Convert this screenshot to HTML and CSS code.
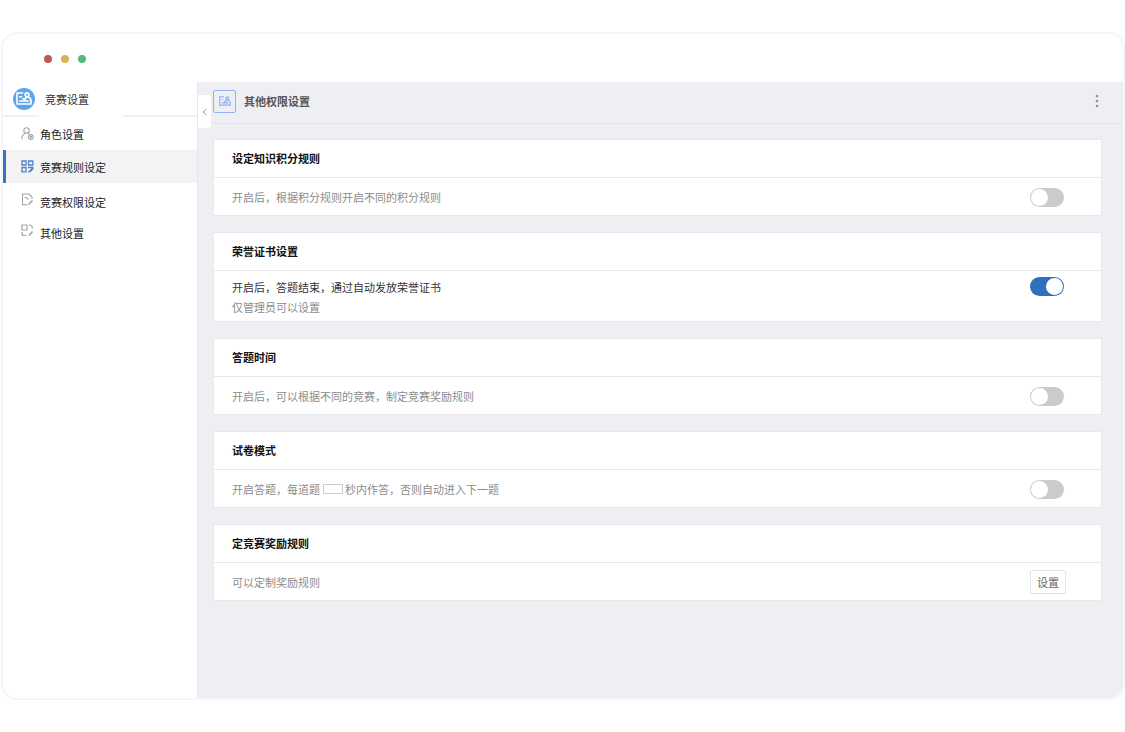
FILE: index.html
```html
<!DOCTYPE html>
<html lang="zh-CN">
<head>
    <meta charset="UTF-8">
    <meta name="viewport" content="width=device-width, initial-scale=1.0">
    <title>竞赛设置</title>
    <link rel="stylesheet" href="styles.css">
</head>
<body>

<div class="window">
    <div class="titlebar">
        <span class="dot red"></span>
        <span class="dot yellow"></span>
        <span class="dot green"></span>
    </div>

    <div class="layout">
        <aside class="sidebar">
            <div class="sidebar-head">
                <span class="logo">
                    <svg width="16" height="13" viewBox="0 0 16 13" fill="none" stroke="#fff" stroke-width="1.6" stroke-linejoin="round" stroke-linecap="round">
                        <path d="M6.500 1H1V12H15V9"/>
                        <path d="M3.800 4.800H5.500M3.800 9H12.500"/>
                        <circle cx="11" cy="2.800" r="1.900"/>
                        <path d="M7 6.500L8.500 8L10 5.300H12.500Q14.800 6 15 9"/>
                    </svg>
                </span>
                <span>竞赛设置</span>
            </div>
            <nav class="menu">
                <a class="menu-item" href="#">
                    <svg width="13" height="13" viewBox="0 0 13 13" fill="none" stroke="#a5a5a5" stroke-width="1.100">
                        <circle cx="5.500" cy="3.500" r="2.700"/>
                        <path d="M.8 12C.8 9 2.500 7 4.500 6.200M6.800 6C7.500 6.500 7.800 6.700 8.300 7"/>
                        <circle cx="9.800" cy="10" r="2.400"/>
                        <circle cx="9.800" cy="10" r=".7"/>
                    </svg>
                    <span>角色设置</span>
                </a>
                <a class="menu-item active" href="#">
                    <svg width="13" height="13" viewBox="0 0 13 13" fill="none" stroke="#4d83cc" stroke-width="1.300">
                        <path d="M1 1H5V5H1ZM7.500 1H11.800V5H7.500ZM1 7.500H5V11.800H1Z"/>
                        <path d="M7 7.500H11.800V9M7 11.800H8.500"/>
                        <path d="M8.500 11.800L12 8.300" stroke-width="2"/>
                    </svg>
                    <span>竞赛规则设定</span>
                </a>
                <a class="menu-item raised" href="#">
                    <svg width="13" height="13" viewBox="0 0 13 13" fill="none" stroke="#a5a5a5" stroke-width="1.100">
                        <path d="M6.500 11.800H1.500V1H8L11 4V6"/>
                        <path d="M3.500 4.500H5.500L7.500 6.500"/>
                        <path d="M7.500 11.500L11.500 7.500" stroke-width="1.700"/>
                    </svg>
                    <span>竞赛权限设定</span>
                </a>
                <a class="menu-item last" href="#">
                    <svg width="13" height="13" viewBox="0 0 13 13" fill="none" stroke="#a5a5a5" stroke-width="1.200">
                        <path d="M1 1H6V6H1Z"/>
                        <path d="M8 1H9Q11 1 11.500 4.500M1 8V9.500Q1 11.500 3 11.500H5.500"/>
                        <path d="M8 11.500L11.500 7.500" stroke-width="1.700"/>
                    </svg>
                    <span>其他设置</span>
                </a>
            </nav>
        </aside>

        <main class="main">
            <button class="collapse" aria-label="收起菜单">
                <svg width="5" height="8" viewBox="0 0 5 8" fill="none" stroke="#999"><path d="M4.500 1L1 4L4.500 7"/></svg>
            </button>
            <header class="main-head">
                <span class="head-icon">
                    <svg width="12" height="10" viewBox="0 0 16 13" fill="none" stroke="#8fb2f5" stroke-width="1.600">
                        <path d="M6.500 1H1V12H15V9"/>
                        <path d="M3.800 4.800H5.500M3.800 9H12.500"/>
                        <circle cx="11" cy="2.800" r="1.900"/>
                        <path d="M7 6.500L8.500 8L10 5.300H12.500Q14.800 6 15 9"/>
                    </svg>
                </span>
                <h1>其他权限设置</h1>
                <button class="more" aria-label="更多">
                    <svg width="4" height="14" viewBox="0 0 4 14" fill="#909194"><circle cx="2" cy="2" r="1.300"/><circle cx="2" cy="7" r="1.300"/><circle cx="2" cy="12" r="1.300"/></svg>
                </button>
            </header>

            <div class="cards">
                <section class="card">
                    <h2>设定知识积分规则</h2>
                    <div class="card-body">
                        <label for="score">开启后，根据积分规则开启不同的积分规则</label>
                        <input class="switch" type="checkbox" id="score">
                    </div>
                </section>

                <section class="card">
                    <h2>荣誉证书设置</h2>
                    <div class="card-body tall">
                        <div class="lines">
                            <label class="dark" for="honor">开启后，答题结束，通过自动发放荣誉证书</label>
                            <p>仅管理员可以设置</p>
                        </div>
                        <input class="switch" type="checkbox" id="honor" checked>
                    </div>
                </section>

                <section class="card">
                    <h2>答题时间</h2>
                    <div class="card-body">
                        <label for="time">开启后，可以根据不同的竞赛，制定竞赛奖励规则</label>
                        <input class="switch" type="checkbox" id="time">
                    </div>
                </section>

                <section class="card">
                    <h2>试卷模式</h2>
                    <div class="card-body">
                        <div class="sentence">
                            <label for="seconds">开启答题，每道题</label>
                            <input class="seconds" type="text" id="seconds">
                            <label for="paper">秒内作答，否则自动进入下一题</label>
                        </div>
                        <input class="switch" type="checkbox" id="paper">
                    </div>
                </section>

                <section class="card">
                    <h2>定竞赛奖励规则</h2>
                    <div class="card-body">
                        <p>可以定制奖励规则</p>
                        <button class="set-btn">设置</button>
                    </div>
                </section>
            </div>
        </main>
    </div>
</div>

</body>
</html>
```
FILE: styles.css
```css
* {
    box-sizing: border-box;
}

body {
    margin: 0;
    padding: 32px 0 32px 1px;
    background-color: #fff;
    color: #333;
    font-family: "Noto Sans CJK SC", sans-serif;
    font-size: 11px;
    line-height: 18px;
}

h1, h2, p {
    margin: 0;
    font-size: 11px;
}

button, input {
    margin: 0;
    font-family: inherit;
    font-size: 11px;
}

button {
    padding: 0;
    cursor: pointer;
}

svg {
    display: block;
    flex-shrink: 0;
}

.window {
    display: flex;
    flex-direction: column;
    min-height: calc(100vh - 64px);
    border: 2px solid #f4f6fe;
    border-radius: 16px;
    overflow: hidden;
}

.titlebar {
    display: flex;
    align-items: center;
    gap: 9px;
    height: 48px;
    padding: 2px 0 0 41px;
}

.dot {
    width: 8px;
    height: 8px;
    border-radius: 50%;
}

.red { background-color: #bd5757; }
.yellow { background-color: #dcb150; }
.green { background-color: #55b986; }

.layout {
    display: flex;
    flex: 1;
}

/* 左侧菜单 */
.sidebar {
    width: 194px;
    flex-shrink: 0;
}

.sidebar-head {
    display: flex;
    align-items: center;
    gap: 10px;
    height: 35px;
    padding: 0 0 2px 10px;
    /* 标题下方中间断开的线 */
    background: linear-gradient(to right, #f0f0f0 36px, #fff 36px, #fff 120px, #f0f0f0 120px) bottom / 100% 2px no-repeat;
}

.logo {
    display: flex;
    align-items: center;
    justify-content: center;
    width: 22px;
    height: 22px;
    border-radius: 50%;
    background-color: #5fa5ea;
}

.menu-item {
    display: flex;
    align-items: center;
    gap: 6px;
    height: 33px;
    padding-left: 15px;
    border-left: 3px solid transparent;
    color: #222;
    text-decoration: none;
}

.menu-item.active {
    background-color: #f3f3f3;
    border-left-color: #3a74bd;
}

.raised, .last {
    align-items: flex-start;
    padding-top: 10px;
}

.raised {
    height: 31px;
}

/* 右侧内容 */
.main {
    position: relative;
    flex: 1;
    min-width: 0;
    background-color: #eeeff3;
    border-left: 1px solid #e8e8ea;
}

.collapse {
    position: absolute;
    top: 13px;
    left: 0;
    display: flex;
    align-items: center;
    justify-content: center;
    width: 13px;
    height: 33px;
    border: 0;
    border-radius: 0 4px 4px 0;
    background-color: #fff;
}

.main-head {
    display: flex;
    align-items: center;
    gap: 8px;
    height: 42px;
    padding: 0 24px 3px 15px;
    border-bottom: 1px solid #e4e5e9;
}

.main-head h1 {
    flex: 1;
    color: #555;
}

.head-icon {
    display: flex;
    align-items: center;
    justify-content: center;
    width: 23px;
    height: 23px;
    border: 1px solid #8fb2f5;
    border-radius: 2px;
}

.more {
    border: 0;
    background: none;
}

.cards {
    display: flex;
    flex-direction: column;
    gap: 16px;
    padding: 15px 21px 24px 15px;
}

.card {
    background-color: #fff;
    border: 1px solid #e8e8eb;
}

.card h2 {
    padding: 9px 18px 10px;
    border-bottom: 1px solid #e8e8e8;
    color: #111;
}

.card-body {
    display: flex;
    align-items: center;
    justify-content: space-between;
    height: 37px;
    padding: 1px 37px 0 18px;
    color: #8c8c8c;
}

.card-body.tall {
    align-items: flex-start;
    height: 50px;
    padding-top: 6px;
}

.lines {
    padding-top: 1px;
}

.lines label {
    display: block;
    margin-bottom: 2px;
}

.dark {
    color: #333;
}

.switch {
    appearance: none;
    display: flex;
    align-items: center;
    width: 34px;
    height: 19px;
    padding: 1px;
    border-radius: 10px;
    background-color: #cbcbcb;
    cursor: pointer;
}

.switch::before {
    content: "";
    width: 17px;
    height: 17px;
    border-radius: 50%;
    background-color: #fff;
}

.switch:checked {
    justify-content: flex-end;
    background-color: #2f70bd;
}

.sentence {
    display: flex;
    align-items: center;
}

.seconds {
    width: 20px;
    height: 10px;
    margin: 0 2px 0 3px;
    padding: 0;
    border: 1px solid #ccc;
    background-color: #fff;
}

.set-btn {
    width: 36px;
    height: 24px;
    margin-right: -2px;
    border: 1px solid #e4e4e4;
    border-radius: 2px;
    background-color: #fff;
    color: #666;
}
```
